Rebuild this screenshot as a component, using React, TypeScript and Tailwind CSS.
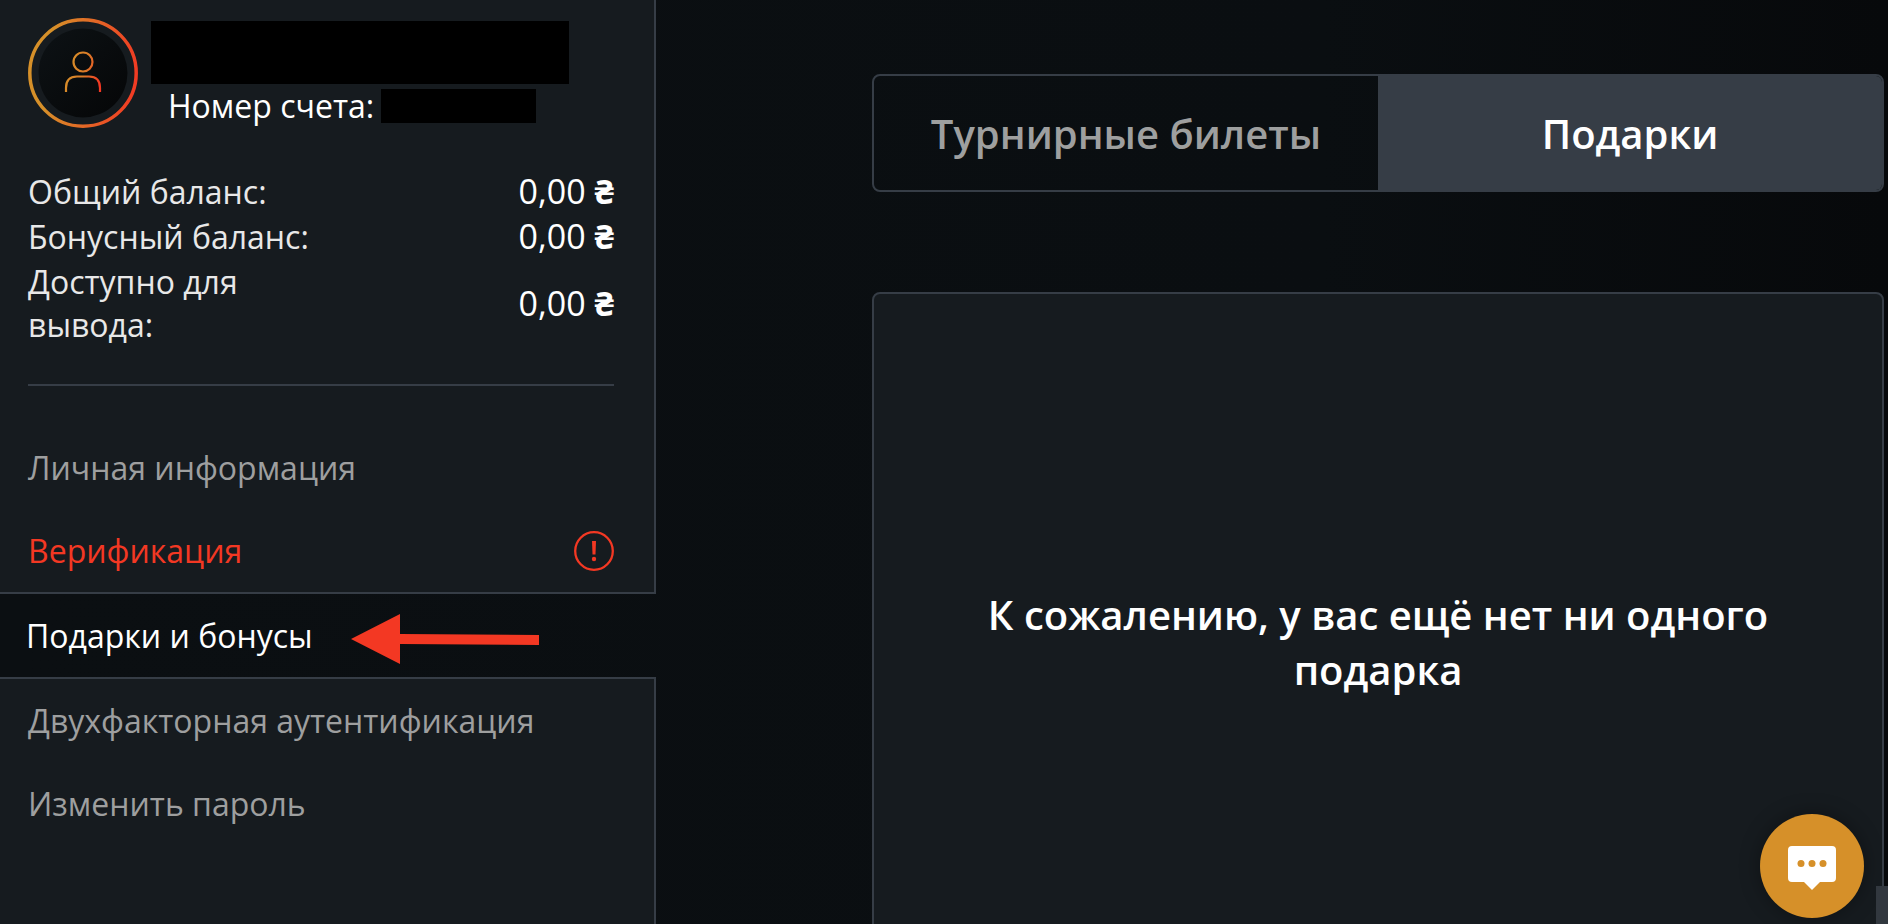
import { useState } from 'react'
import clsx from 'clsx'

interface MenuItem {
  id: string
  label: string
  warning?: boolean
}

const BALANCES = [
  { label: 'Общий баланс:', value: '0,00' },
  { label: 'Бонусный баланс:', value: '0,00' },
  { label: 'Доступно для вывода:', value: '0,00' },
]

const MENU_TOP: MenuItem[] = [
  { id: 'personal', label: 'Личная информация' },
  { id: 'verification', label: 'Верификация', warning: true },
]

const MENU_BOTTOM: MenuItem[] = [
  { id: 'two-factor', label: 'Двухфакторная аутентификация' },
  { id: 'password', label: 'Изменить пароль' },
]

const TABS = ['Турнирные билеты', 'Подарки']

function Avatar() {
  return (
    <svg className="size-[110px] shrink-0" viewBox="0 0 110 110" fill="none" aria-hidden="true">
      <defs>
        <linearGradient id="ring" gradientUnits="userSpaceOnUse" x1="20" y1="45" x2="112" y2="55">
          <stop offset="0" stopColor="#d69029" />
          <stop offset="1" stopColor="#f33823" />
        </linearGradient>
        <linearGradient id="person" gradientUnits="userSpaceOnUse" x1="38" y1="50" x2="73" y2="60">
          <stop offset="0" stopColor="#d69029" />
          <stop offset="0.5" stopColor="#dc7c28" />
          <stop offset="1" stopColor="#f33823" />
        </linearGradient>
        <linearGradient id="disc" x1="0" y1="0" x2="1" y2="1">
          <stop offset="0" stopColor="#0d1215" />
          <stop offset="1" stopColor="#050607" />
        </linearGradient>
      </defs>
      <circle cx="55" cy="55" r="53.2" stroke="url(#ring)" strokeWidth="3.5" />
      <circle cx="55" cy="55" r="44.5" fill="url(#disc)" />
      <circle cx="55" cy="44" r="9.5" stroke="url(#person)" strokeWidth="2.2" />
      <path d="M38 74V70Q38 58.5 49 58.5H61Q72 58.5 72 70V74" stroke="url(#person)" strokeWidth="2.2" />
    </svg>
  )
}

function WarningIcon() {
  return (
    <svg className="size-10 shrink-0" viewBox="0 0 40 40" fill="none" aria-hidden="true">
      <circle cx="20" cy="20" r="18.8" stroke="#f33823" strokeWidth="2.3" />
      <path d="M18 10h4l-.5 13.5h-3z" fill="#f33823" />
      <circle cx="20" cy="28" r="2.2" fill="#f33823" />
    </svg>
  )
}

function Arrow() {
  return (
    <svg className="h-14 w-[188px] shrink-0" viewBox="0 0 188 56" fill="#f33823" aria-hidden="true">
      <path d="M0 31L49 6V26L188 27V37L49 36V56Z" />
    </svg>
  )
}

function MenuLink({ item }: { item: MenuItem }) {
  return (
    <li>
      <a
        href={`#${item.id}`}
        className={clsx(
          'flex h-[83px] items-center justify-between pr-10 pl-7',
          item.warning ? 'text-[#f33823]' : 'text-[#9e9f9f]',
        )}
      >
        {item.label}
        {item.warning && <WarningIcon />}
      </a>
    </li>
  )
}

function Sidebar() {
  return (
    <aside className="flex w-[656px] shrink-0 flex-col text-[32px] leading-[43px]">
      <div className="border-r-2 border-b-2 border-[#363d46] bg-[#161b1f] pt-[18px]">
        <div className="flex gap-[13px] pl-7">
          <Avatar />
          <div className="pt-[3px]">
            <div className="h-[63px] w-[418px] bg-black" />
            <div className="flex items-center gap-[7px] pl-[17px] text-white">
              Номер счета:
              <span className="h-[34px] w-[155px] bg-black" />
            </div>
          </div>
        </div>

        <dl className="mt-[42px] mr-10 ml-7 flex flex-col gap-[2px] border-b-2 border-[#363d46] pb-[38px]">
          {BALANCES.map((row) => (
            <div key={row.label} className="flex items-center justify-between">
              <dt className="max-w-[300px] text-[#e8e8e8]">{row.label}</dt>
              <dd className="text-[34px] text-white">
                {row.value} <span className="font-bold">₴</span>
              </dd>
            </div>
          ))}
        </dl>

        <ul className="pt-10">
          {MENU_TOP.map((item) => (
            <MenuLink key={item.id} item={item} />
          ))}
        </ul>
      </div>

      <a href="#gifts" aria-current="page" className="flex h-[83px] shrink-0 items-center gap-[38px] pl-[26px] text-white">
        Подарки и бонусы
        <Arrow />
      </a>

      <ul className="grow border-t-2 border-r-2 border-[#363d46] bg-[#161b1f]">
        {MENU_BOTTOM.map((item) => (
          <MenuLink key={item.id} item={item} />
        ))}
      </ul>
    </aside>
  )
}

function ChatButton() {
  return (
    <button
      type="button"
      aria-label="Чат"
      className="fixed right-6 bottom-[6px] flex size-[104px] items-center justify-center rounded-full bg-[#d69029] shadow-[0_0_20px_rgba(0,0,0,0.35)]"
    >
      <svg className="size-12" viewBox="0 0 48 48" aria-hidden="true">
        <path d="M4 4H44Q48 4 48 8V36Q48 40 44 40H32L24 48L16 40H4Q0 40 0 36V8Q0 4 4 4Z" fill="#fff" />
        <circle cx="13" cy="21.5" r="3.5" fill="#d69029" />
        <circle cx="24" cy="21.5" r="3.5" fill="#d69029" />
        <circle cx="35" cy="21.5" r="3.5" fill="#d69029" />
      </svg>
    </button>
  )
}

export default function App() {
  const [tab, setTab] = useState('Подарки')

  return (
    <div className="flex h-screen overflow-hidden bg-linear-to-r from-[#0b0f12] via-[#0a0e11] via-70% to-[#07090b] font-['Open_Sans','Noto_Sans',sans-serif]">
      <Sidebar />

      <main className="flex grow flex-col gap-[100px] pt-[74px] pr-1 pl-[216px] text-[40px] leading-[55px] font-semibold">
        <div role="tablist" className="grid h-[118px] shrink-0 grid-cols-2 overflow-hidden rounded-lg border-2 border-[#363d46]">
          {TABS.map((name) => (
            <button
              key={name}
              type="button"
              role="tab"
              aria-selected={tab === name}
              onClick={() => setTab(name)}
              className={clsx(tab === name ? 'bg-[#363d46] text-white' : 'text-[#9e9f9f]')}
            >
              {name}
            </button>
          ))}
        </div>

        <section className="flex h-[700px] shrink-0 items-center justify-center rounded-lg border-2 border-[#363d46] bg-[#161b1f] px-16">
          <p className="text-center text-white">К сожалению, у вас ещё нет ни одного подарка</p>
        </section>
      </main>

      <ChatButton />
      <div className="fixed right-0 bottom-0 h-[38px] w-3 bg-[#32383f]" />
    </div>
  )
}
